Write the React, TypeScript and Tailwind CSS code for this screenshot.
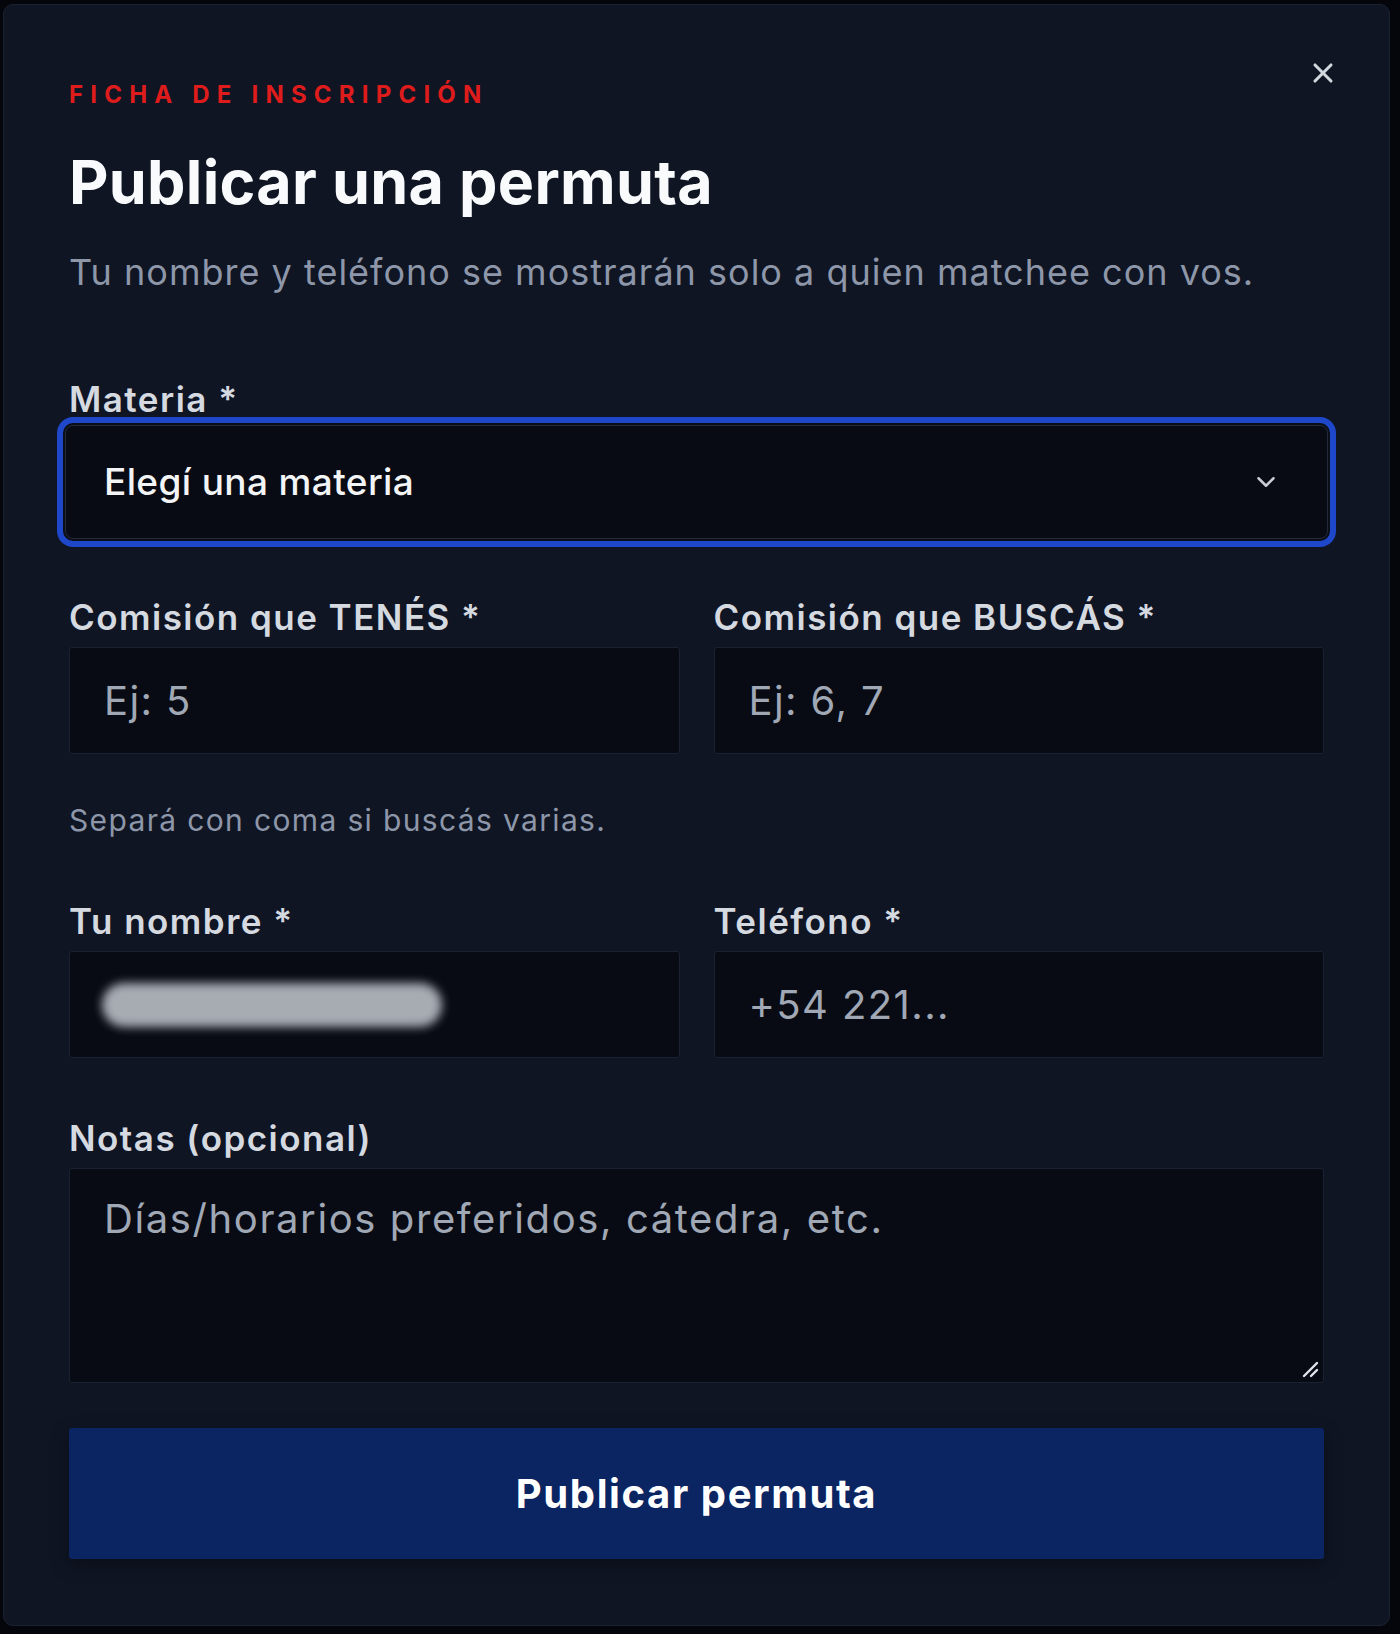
import { ChevronDown, X } from "lucide-react";

const sans = "font-['Inter','Liberation_Sans',sans-serif]";

function Label({ children }: { children: React.ReactNode }) {
  return (
    <label className={`${sans} block text-[35px] font-semibold leading-[40px] tracking-[0.042em] text-[#d5d9e0]`}>
      {children}
    </label>
  );
}

function Field({ placeholder }: { placeholder: string }) {
  return (
    <input
      placeholder={placeholder}
      className={`${sans} mt-[10px] block h-[107px] w-full rounded-[3px] border border-[#1a2131] bg-[#080b13] px-[34px] text-[40px] tracking-[0.035em] text-[#e5e7eb] outline-none placeholder:text-[#a0a8b6]`}
    />
  );
}

export default function App() {
  return (
    <div className="h-[1634px] w-full overflow-hidden bg-[#04060b] pl-[3px] pt-[4px]">
      <div className="relative h-[1622px] w-[1387px] rounded-[10px] border border-[#1a2232] bg-[#0f1523] px-[65px] pt-[75px]">
        <button
          type="button"
          aria-label="Cerrar"
          className="absolute right-[50px] top-[52px] text-[#d3d7de]"
        >
          <X size={32} strokeWidth={2.3} />
        </button>

        <p className={`${sans} text-[24px] font-bold uppercase leading-[30px] tracking-[0.3em] text-[#df1c1c]`}>
          Ficha de inscripción
        </p>
        <h2 className={`${sans} mt-[39px] text-[61px] font-bold leading-[66px] tracking-[0.005em] text-[#f8fafc]`}>
          Publicar una permuta
        </h2>
        <p className={`${sans} mt-[33px] text-[36px] leading-[49px] tracking-[0.028em] text-[#8d97a9]`}>
          Tu nombre y teléfono se mostrarán solo a quien matchee con vos.
        </p>

        <div className="mt-[82px]">
          <Label>Materia *</Label>
          <button
            type="button"
            className={`${sans} -mx-[4px] mt-[6px] flex h-[114px] w-[calc(100%+8px)] items-center justify-between rounded-[8px] border border-[#232a3a] bg-[#080b13] pl-[38px] pr-[46px] text-[37px] font-medium tracking-[0.01em] text-[#f3f4f6] shadow-[0_0_0_2px_#0a0e17,0_0_0_8px_#1f47c9]`}
          >
            Elegí una materia
            <ChevronDown size={30} strokeWidth={2} className="text-[#c9ced6]" />
          </button>
        </div>

        <div className="mt-[58px] grid grid-cols-2 gap-x-[34px]">
          <div>
            <Label>Comisión que TENÉS *</Label>
            <Field placeholder="Ej: 5" />
          </div>
          <div>
            <Label>Comisión que BUSCÁS *</Label>
            <Field placeholder="Ej: 6, 7" />
          </div>
        </div>

        <p className={`${sans} mt-[47px] text-[30px] leading-[38px] tracking-[0.045em] text-[#8d97a9]`}>
          Separá con coma si buscás varias.
        </p>

        <div className="mt-[62px] grid grid-cols-2 gap-x-[34px]">
          <div>
            <Label>Tu nombre *</Label>
            <div className="mt-[10px] flex h-[107px] w-full items-center rounded-[3px] border border-[#1a2131] bg-[#080b13] px-[32px]">
              <div className="h-[44px] w-[340px] rounded-full bg-[#a7abb2] blur-[5px]" />
            </div>
          </div>
          <div>
            <Label>Teléfono *</Label>
            <Field placeholder="+54 221..." />
          </div>
        </div>

        <div className="mt-[60px]">
          <Label>Notas (opcional)</Label>
          <div className="relative mt-[10px]">
            <textarea
              placeholder="Días/horarios preferidos, cátedra, etc."
              className={`${sans} block h-[215px] w-full resize-none rounded-[3px] border border-[#1a2131] bg-[#080b13] px-[34px] py-[21px] text-[40px] leading-[58px] tracking-[0.04em] text-[#e5e7eb] outline-none placeholder:text-[#a0a8b6]`}
            />
            <svg
              aria-hidden
              viewBox="0 0 20 20"
              className="pointer-events-none absolute bottom-[4px] right-[4px] h-[20px] w-[20px] text-[#e2e5ea]"
            >
              <path d="M17 4 L4 17 M17 11 L11 17" stroke="currentColor" strokeWidth="2.4" strokeLinecap="round" />
            </svg>
          </div>
        </div>

        <button
          type="button"
          className={`${sans} mt-[45px] block h-[131px] w-full rounded-[3px] bg-[#0b2462] text-[40px] font-bold tracking-[0.04em] text-white shadow-[0_6px_18px_rgba(0,0,0,0.35)]`}
        >
          Publicar permuta
        </button>
      </div>
    </div>
  );
}
